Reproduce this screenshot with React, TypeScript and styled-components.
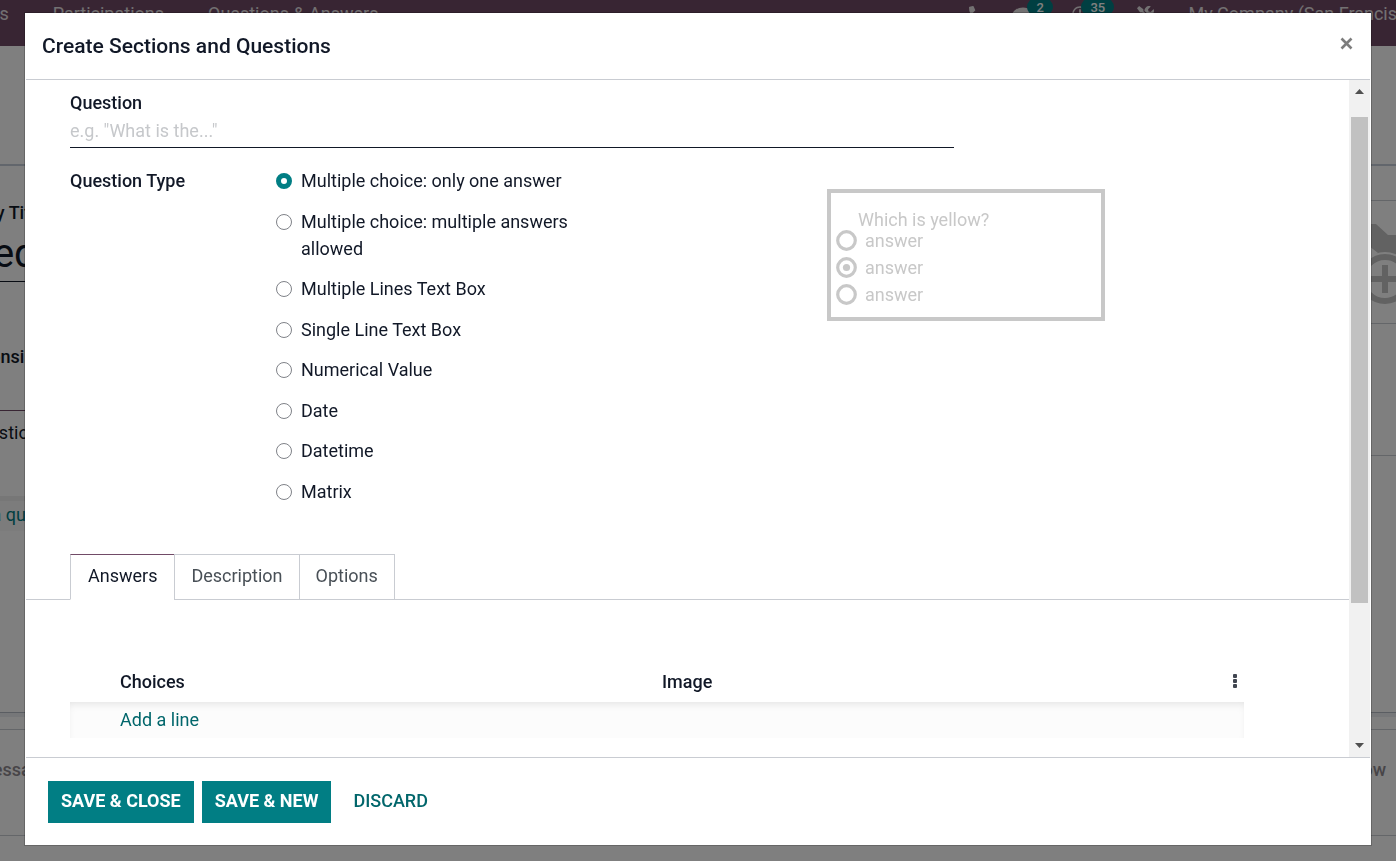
import React from "react";
import styled, { createGlobalStyle } from "styled-components";
import { FaPhoneAlt, FaComment, FaRegClock, FaTools } from "react-icons/fa";

const line = "#c9ccd2";
const teal = "#017e84";
const ink = "#111827";

const GlobalStyle = createGlobalStyle`
  * { box-sizing: border-box; }
  html, body { margin: 0; height: 100%; }
  body {
    overflow: hidden;
    background: #fff;
    color: ${ink};
    font: 400 18px/27px Roboto, sans-serif;
  }
  button, input { font: inherit; color: inherit; }
  button { cursor: pointer; }
`;

/* ---------- survey form behind the dialog ---------- */

const Page = styled.div`
  height: 100vh;
  overflow: hidden;
`;

const NavBar = styled.header`
  display: flex;
  align-items: flex-start;
  height: 46px;
  background: #714b67;
  color: #e6e2e5;
  white-space: nowrap;
`;

const NavMenu = styled.nav`
  display: flex;
  flex: 1;
  gap: 44px;
  margin-left: -54px;

  a {
    color: inherit;
    text-decoration: none;
  }
`;

const NavTools = styled.div`
  display: flex;
  align-items: flex-start;
  margin-right: -27px;
`;

const Tool = styled.span<{ $width: number }>`
  display: flex;
  width: ${(p) => p.$width}px;
  padding-top: 6px;
`;

const Count = styled.span`
  height: 18px;
  margin: -8px 0 0 -7px;
  padding: 0 9px;
  border-radius: 9px;
  background: ${teal};
  color: #fff;
  font-size: 13px;
  font-weight: 500;
  line-height: 20px;
`;

const ControlPanel = styled.div`
  height: 119px;
  border-bottom: 1px solid #c4cdd8;
`;

const Sheet = styled.main`
  height: 548px;
  margin-left: -50px;
  border-top: 1px solid #c4cdd8;
  border-bottom: 1px solid #b4bac4;
  display: flex;
  justify-content: space-between;
  white-space: nowrap;
`;

const SheetFields = styled.div`
  display: flex;
  flex-direction: column;
  width: 300px;
  padding-top: 33px;
`;

const FieldLabel = styled.div`
  font-weight: 500;
`;

const SurveyTitle = styled.div`
  height: 56px;
  margin-bottom: 61px;
  border-bottom: 1px solid ${ink};
  font-size: 40px;
  line-height: 56px;
`;

const SheetTab = styled.div`
  margin-top: 40px;
  padding: 8px 17px;
  border-top: 1px solid #714b67;
`;

const SheetRow = styled.div`
  margin-top: 42px;
  padding: 0 5px 3px;
  border-top: 5px solid #eeeeee;
  background: #f9f9f9;
  color: ${teal};
`;

const SheetAside = styled.div`
  width: 125px;
  padding-top: 34px;
`;

const Photo = styled.div`
  height: 124px;
  border: solid #c9ccd2;
  border-width: 1px 0;
  color: #c4c4c4;

  svg { display: block; }
`;

const AsideRule = styled.div`
  height: 132px;
  border-bottom: 1px solid #c9ccd2;
`;

const Chatter = styled.div`
  height: 123px;
  border-top: 4px solid #eceff3;
  border-bottom: 1px solid #c9ccd2;
  padding-top: 12px;
`;

const ChatterBar = styled.div`
  display: flex;
  justify-content: space-between;
  margin-left: -68px;
  padding: 26px 10px 0 0;
  border-top: 1px solid #c9ccd2;
  color: #8f8a90;
  font-weight: 500;
`;

/* ---------- dialog ---------- */

const Overlay = styled.div`
  position: fixed;
  inset: 0;
  display: flex;
  padding: 13px 25px 16px;
  background: rgba(0, 0, 0, 0.5);
`;

const Dialog = styled.section`
  display: flex;
  flex: 1;
  flex-direction: column;
  min-width: 0;
  padding: 0 1px;
  background: #fff;
  box-shadow: 0 0 0 1px rgba(0, 0, 0, 0.2);
`;

const DialogHeader = styled.header`
  display: flex;
  align-items: center;
  justify-content: space-between;
  height: 67px;
  padding: 0 15px 0 16px;
  border-bottom: 1px solid ${line};

  h1 {
    margin: 0;
    font-size: 21px;
    font-weight: 500;
  }
`;

const CloseButton = styled.button`
  display: flex;
  margin-bottom: 6px;
  padding: 2px;
  border: 0;
  background: none;
`;

const DialogBody = styled.div`
  display: flex;
  flex: 1;
  min-height: 0;
`;

const Form = styled.form`
  flex: 1;
  min-width: 0;
  overflow: hidden;
`;

const Fields = styled.div`
  padding: 9px 105px 0 44px;
`;

const Label = styled.label`
  display: block;
  font-weight: 500;
`;

const TitleInput = styled.input`
  display: block;
  width: 884px;
  max-width: 100%;
  height: 32px;
  padding: 0 0 3px;
  border: 0;
  border-bottom: 1px solid ${ink};
  outline: 0;

  &::placeholder {
    color: #c6c8cb;
    opacity: 1;
  }
`;

const TypeRow = styled.div`
  display: grid;
  grid-template-columns: 206px 551px 278px;
  margin-top: 19px;
`;

const TypeLabel = styled.div`
  font-weight: 500;
`;

const Choices = styled.div`
  display: flex;
  flex-direction: column;
  justify-content: space-between;
  width: 300px;
  min-height: 338px;
`;

const Choice = styled.label`
  display: flex;
  gap: 9px;

  input {
    appearance: none;
    flex: none;
    width: 16px;
    height: 16px;
    margin: 6px 0 0;
    border: 1px solid #7f8288;
    border-radius: 50%;
    background: #fff;
  }

  input:checked {
    border: 5px solid ${teal};
  }
`;

const Preview = styled.div`
  align-self: start;
  height: 132px;
  margin-top: 22px;
  padding: 16px 5px;
  border: 4px solid #c8c8c8;
  color: #c8c8c8;
`;

const PreviewTitle = styled.div`
  padding-left: 22px;
  line-height: 21px;
`;

const PreviewAnswer = styled.div`
  display: flex;
  align-items: center;
  gap: 8px;
  height: 27px;
  margin-top: -3px;
  margin-bottom: 3px;
`;

const Tabs = styled.div`
  display: flex;
  height: 46px;
  margin-top: 49px;
  padding-left: 44px;
  border-bottom: 1px solid ${line};
`;

const Tab = styled.button<{ $active?: boolean }>`
  height: 46px;
  margin-right: -1px;
  padding: ${(p) => (p.$active ? "0 17px 4px" : "0 16px 4px")};
  border: 1px solid ${line};
  border-top-color: ${(p) => (p.$active ? "#714b67" : line)};
  border-bottom-color: ${(p) => (p.$active ? "#fff" : line)};
  background: #fff;
  color: ${(p) => (p.$active ? ink : "#495057")};
`;

const TableArea = styled.div`
  padding: 62px 105px 0 44px;
`;

const Lines = styled.table`
  width: 100%;
  border-collapse: collapse;
  table-layout: fixed;

  th {
    height: 40px;
    padding: 0 0 2px;
    text-align: left;
    font-weight: 500;
  }

  th svg { display: block; }

  td {
    height: 36px;
    padding: 0 0 2px 50px;
    background: #fcfcfc;
    box-shadow: inset 0 5px 10px -4px rgba(0, 0, 0, 0.12);
  }

  a {
    color: #01666b;
    text-decoration: none;
  }
`;

const ScrollBar = styled.div`
  display: flex;
  flex-direction: column;
  align-items: center;
  width: 21px;
  padding: 9px 0;
  background: #f1f1f1;

  svg { display: block; flex: none; }
`;

const Track = styled.div`
  display: flex;
  flex: 1;
  flex-direction: column;
  width: 17px;
  padding: 23px 0 18px;
`;

const Thumb = styled.div`
  height: 80%;
  background: #c1c1c1;
`;

const DialogFooter = styled.footer`
  display: flex;
  gap: 8px;
  height: 88px;
  padding: 23px 22px;
  border-top: 1px solid ${line};
`;

const Button = styled.button<{ $primary?: boolean }>`
  height: 42px;
  padding: ${(p) => (p.$primary ? "0 13px 4px" : "0 14px 4px")};
  border: 0;
  background: ${(p) => (p.$primary ? teal : "none")};
  color: ${(p) => (p.$primary ? "#fff" : "#01666b")};
  font-weight: ${(p) => (p.$primary ? 700 : 500)};
  text-transform: uppercase;
`;

const types = [
  "Multiple choice: only one answer",
  "Multiple choice: multiple answers allowed",
  "Multiple Lines Text Box",
  "Single Line Text Box",
  "Numerical Value",
  "Date",
  "Datetime",
  "Matrix",
];

const RadioMark = ({ on }: { on?: boolean }) => (
  <svg width="21" height="21" viewBox="0 0 21 21" aria-hidden="true">
    <circle cx="10.5" cy="10.5" r="8.8" fill="none" stroke="currentColor" strokeWidth="3.2" />
    {on && <circle cx="10.5" cy="10.5" r="3.6" fill="currentColor" />}
  </svg>
);

export default function App() {
  const [type, setType] = React.useState(types[0]);

  return (
    <>
      <GlobalStyle />
      <Page>
        <NavBar>
          <NavMenu>
            <a href="#surveys">Surveys</a>
            <a href="#participations">Participations</a>
            <a href="#questions">Questions &amp; Answers</a>
          </NavMenu>
          <NavTools>
            <Tool $width={43}><FaPhoneAlt size={16} /></Tool>
            <Tool $width={60}><FaComment size={22} /><Count>2</Count></Tool>
            <Tool $width={65}><FaRegClock size={16} /><Count>35</Count></Tool>
            <Tool $width={51}><FaTools size={17} /></Tool>
            <span>My Company (San Francisco)</span>
          </NavTools>
        </NavBar>
        <ControlPanel />
        <Sheet>
          <SheetFields>
            <FieldLabel>Survey Title</FieldLabel>
            <SurveyTitle>Feedback</SurveyTitle>
            <FieldLabel>Responsible</FieldLabel>
            <SheetTab>Questions</SheetTab>
            <SheetRow>Add a question</SheetRow>
          </SheetFields>
          <SheetAside>
            <Photo>
              <svg width="125" height="122" viewBox="0 0 125 122">
                <path d="M20 23H105L117 34H125V88H20Z" fill="currentColor" />
                <path d="M98 45L107 52L98 57Z" fill="#fff" />
                <circle cx="114" cy="78" r="27" fill="#fff" />
                <circle cx="114" cy="78" r="22" fill="none" stroke="currentColor" strokeWidth="6" />
                <path d="M100 78H128M114 64V92" stroke="currentColor" strokeWidth="6" />
              </svg>
            </Photo>
            <AsideRule />
          </SheetAside>
        </Sheet>
        <Chatter>
          <ChatterBar>
            <span>Send message</span>
            <span>Follow</span>
          </ChatterBar>
        </Chatter>
      </Page>

      <Overlay>
        <Dialog role="dialog" aria-modal="true" aria-labelledby="dialog-title">
          <DialogHeader>
            <h1 id="dialog-title">Create Sections and Questions</h1>
            <CloseButton aria-label="Close">
              <svg width="13" height="13" viewBox="0 0 13 13">
                <path d="M1.5 1.5L11.5 11.5M11.5 1.5L1.5 11.5" stroke="#7d7d7d" strokeWidth="2.6" />
              </svg>
            </CloseButton>
          </DialogHeader>

          <DialogBody>
            <Form>
              <Fields>
                <Label htmlFor="question">Question</Label>
                <TitleInput id="question" placeholder={'e.g. "What is the..."'} />
                <TypeRow>
                  <TypeLabel id="type-label">Question Type</TypeLabel>
                  <Choices role="radiogroup" aria-labelledby="type-label">
                    {types.map((t) => (
                      <Choice key={t}>
                        <input type="radio" name="type" checked={t === type} onChange={() => setType(t)} />
                        <span>{t}</span>
                      </Choice>
                    ))}
                  </Choices>
                  <Preview>
                    <PreviewTitle>Which is yellow?</PreviewTitle>
                    <PreviewAnswer><RadioMark />answer</PreviewAnswer>
                    <PreviewAnswer><RadioMark on />answer</PreviewAnswer>
                    <PreviewAnswer><RadioMark />answer</PreviewAnswer>
                  </Preview>
                </TypeRow>
              </Fields>

              <Tabs role="tablist">
                <Tab type="button" role="tab" aria-selected="true" $active>Answers</Tab>
                <Tab type="button" role="tab" aria-selected="false">Description</Tab>
                <Tab type="button" role="tab" aria-selected="false">Options</Tab>
              </Tabs>

              <TableArea>
                <Lines>
                  <colgroup>
                    <col width="50" />
                    <col width="542" />
                    <col />
                    <col width="11" />
                  </colgroup>
                  <thead>
                    <tr>
                      <th aria-label="Order" />
                      <th>Choices</th>
                      <th>Image</th>
                      <th aria-label="Optional columns">
                        <svg width="5" height="14" viewBox="0 0 5 14" fill="#414650">
                          <rect width="4" height="4" rx="1" />
                          <rect y="5" width="4" height="4" rx="1" />
                          <rect y="10" width="4" height="4" rx="1" />
                        </svg>
                      </th>
                    </tr>
                  </thead>
                  <tbody>
                    <tr>
                      <td colSpan={4}><a href="#add">Add a line</a></td>
                    </tr>
                  </tbody>
                </Lines>
              </TableArea>
            </Form>

            <ScrollBar aria-hidden="true">
              <svg width="9" height="5" viewBox="0 0 9 5"><path d="M0 5L4.500 0L9 5Z" fill="#505050" /></svg>
              <Track><Thumb /></Track>
              <svg width="9" height="5" viewBox="0 0 9 5"><path d="M0 0L4.500 5L9 0Z" fill="#505050" /></svg>
            </ScrollBar>
          </DialogBody>

          <DialogFooter>
            <Button type="button" $primary>Save &amp; Close</Button>
            <Button type="button" $primary>Save &amp; New</Button>
            <Button type="button">Discard</Button>
          </DialogFooter>
        </Dialog>
      </Overlay>
    </>
  );
}
